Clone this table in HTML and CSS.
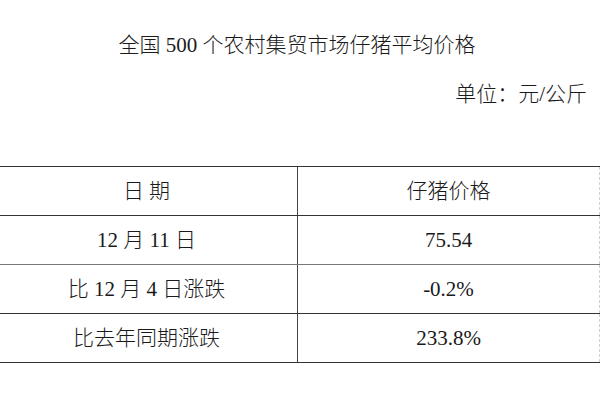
FILE: index.html
```html
<!DOCTYPE html>
<html lang="zh-CN">
<head>
<meta charset="utf-8">
<title>全国500个农村集贸市场仔猪平均价格</title>
<link rel="stylesheet" href="styles.css">
</head>
<body>
<div class="page">
  <h1 class="title">全国 500 个农村集贸市场仔猪平均价格</h1>
  <p class="unit">单位：元/公斤</p>
  <div class="grid">
    <div class="row head">
      <div class="cell left">日 期</div>
      <div class="cell right">仔猪价格</div>
    </div>
    <div class="row soft">
      <div class="cell left">12 月 11 日</div>
      <div class="cell right">75.54</div>
    </div>
    <div class="row">
      <div class="cell left">比 12 月 4 日涨跌</div>
      <div class="cell right">-0.2%</div>
    </div>
    <div class="row">
      <div class="cell left">比去年同期涨跌</div>
      <div class="cell right">233.8%</div>
    </div>
  </div>
</div>
</body>
</html>
```
FILE: styles.css
```css
html, body {
  margin: 0;
  padding: 0;
  background: #ffffff;
}

.page {
  width: 600px;
  height: 400px;
  overflow: hidden;
  font-family: "Liberation Serif", "Noto Sans CJK SC", serif;
  font-size: 21px;
  font-weight: 300;
  color: #1a1a1a;
}

.title {
  margin: 0;
  padding: 30px 6px 0 0;
  font-size: 21px;
  font-weight: 300;
  line-height: 30px;
  text-align: center;
}

.unit {
  margin: 19px 0 0 0;
  padding-right: 13px;
  line-height: 30px;
  text-align: right;
}

.grid {
  margin-top: 57px;
  margin-left: -4px;
  width: 604px;
  border-top: 1px solid #333;
}

.row {
  display: grid;
  grid-template-columns: 302px 1fr;
  border-bottom: 1px solid #333;
}

.row.soft {
  border-bottom-color: #777;
}

.cell {
  box-sizing: border-box;
  height: 48px;
  display: flex;
  align-items: center;
  justify-content: center;
  line-height: 1;
}

.cell.left {
  border-right: 1px solid #444;
}

.cell.right {
  border-right: 1px dashed #d0d0d0;
}
```
